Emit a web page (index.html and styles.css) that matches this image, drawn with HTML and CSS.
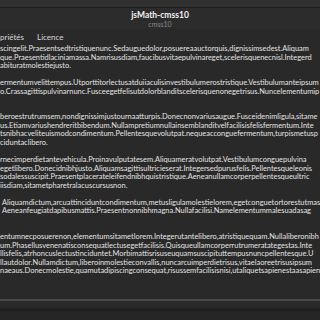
FILE: index.html
```html
<!DOCTYPE html>
<html>

<head>
    <meta charset="UTF-8">
    <title>jsMath-cmss10</title>
    <link rel="stylesheet" href="styles.css">
</head>

<body>
    <div class="window">
        <div class="top-strip"></div>
        <div class="header">
            <div class="title">jsMath-cmss10</div>
            <div class="subtitle">cmss10</div>
        </div>
        <div class="tabs">
            <span class="tab">priétés</span>
            <span class="tab">Licence</span>
        </div>
        <div class="preview">
            <div class="para">
                <div class="line">scingelit.Praesentsedtristiquenunc.Sedauguedolor,posuereaauctorquis,dignissimsedest.Aliquam</div>
                <div class="line">que.Praesentidlaciniamassa.Namrisusdiam,faucibusvitaepulvinareget,scelerisquenecnisl.Integerd</div>
                <div class="line">abituratmolestiejusto.</div>
            </div>
            <div class="para">
                <div class="line">ermentumvelittempus.Utporttitorlectusatduiiaculisinvestibulumerostristique.Vestibulumanteipsum</div>
                <div class="line">o.Crassagittispulvinarnunc.Fusceegetfelisutdolorblanditscelerisquenonegetrisus.Nuncelementumip</div>
                <div class="line"></div>
            </div>
            <div class="para">
                <div class="line">beroestrutrumsem,nondignissimjustournaatturpis.Donecnonvariusaugue.Fusceidenimligula,sitame</div>
                <div class="line">us.Etiamvariushendreritbibendum.Nullampretiumnullainsemblanditvelfacilisisfelisfermentum.Inte</div>
                <div class="line">tsnibhacveliteuismodcondimentum.Pellentesquevolutpat.nequeacconguefermentum,turpismetusp</div>
                <div class="line">ciduntaclibero.</div>
            </div>
            <div class="para">
                <div class="line">rnecimperdietantevehicula.Proinavulputatesem.Aliquameratvolutpat.Vestibulumconguepulvina</div>
                <div class="line">egetlibero.Donecidnibhjusto.Aliquamsagittisultricieserat.Integersedpurusfelis.Pellentesqueleonis</div>
                <div class="line">sodalessuscipit.Praesentplacerateleifendnibhquistristique.Aeneanullamcorperpellentesqueultric</div>
                <div class="line">iisdiam,sitametpharetralacuscursusnon.</div>
            </div>
            <div class="para indent">
                <div class="line">Aliquamdictum,arcuattinciduntcondimentum,metusligulamolestielorem,egetconguetortorestutmas</div>
                <div class="line">Aeneanfeugiatdapibusmattis.Praesentnonnibhmagna.Nullafacilisi.Namelementummalesuadasag</div>
                <div class="line"></div>
            </div>
            <div class="para">
                <div class="line">entumnecposuerenon,elementumsitametlorem.Integerutantelibero,atristiquequam.Nullaliberonibh</div>
                <div class="line">um.Phasellusvenenatisconsequatlectusegetfacilisis.Quisqueullamcorperrutrumeratategestas.Inte</div>
                <div class="line">llisfelis,atrhoncuslectustinciduntet.Morbimattisrisuseuquamsuscipituttempusnuncpellentesque.U</div>
                <div class="line">llautdolor.Nullamdictum,liberoinmolestieconvallis,nuncarcuimperdietrisus,vitaelaoreetrisusipsum</div>
                <div class="line">naeaus.Donecmolestie,quamutadipiscingconsequat,risussemfacilisisnisi,utaliquetsapienestaasapien.C</div>
            </div>
        </div>
        <div class="bottom-bar"></div>
        <div class="bottom-shade"></div>
    </div>
</body>

</html>
```

FILE: styles.css
```css
body {
    margin: 0;
    background-color: #292929;
    font-family: Lato, "Open Sans", sans-serif;
    color: #e4e4e4;
}

.window {
    width: 320px;
    height: 320px;
    overflow: hidden;
    display: flex;
    flex-direction: column;
}

.top-strip {
    height: 7px;
    background-color: #303030;
    border-bottom: 1px solid #1d1d1d;
}

.header {
    height: 21px;
    background-color: #2c2c2c;
    display: flex;
    flex-direction: column;
    align-items: center;
    justify-content: center;
}

.title {
    font-weight: bold;
    font-size: 8.5px;
    line-height: 10px;
    color: #f2f2f2;
}

.subtitle {
    font-size: 7px;
    line-height: 8px;
    color: #8a8a8a;
}

.tabs {
    height: 14px;
    padding-top: 1px;
    display: flex;
    gap: 13px;
    align-items: center;
    font-size: 8px;
    color: #d8d8d8;
}

.preview {
    flex: 1;
    padding-top: 1px;
    font-size: 7.45px;
    line-height: 8.55px;
    white-space: nowrap;
}

.para {
    margin-bottom: 8.55px;
}

.line {
    height: 8.55px;
}

.indent .line {
    padding-left: 2px;
}

.bottom-bar {
    height: 2px;
    background-color: #4a4a4a;
}

.bottom-shade {
    height: 19px;
    background: linear-gradient(#2a2a2a 0, #2a2a2a 6px, #1e1e1e 8px, #1e1e1e 9px, #262626 11px, #262626 100%);
}
```
